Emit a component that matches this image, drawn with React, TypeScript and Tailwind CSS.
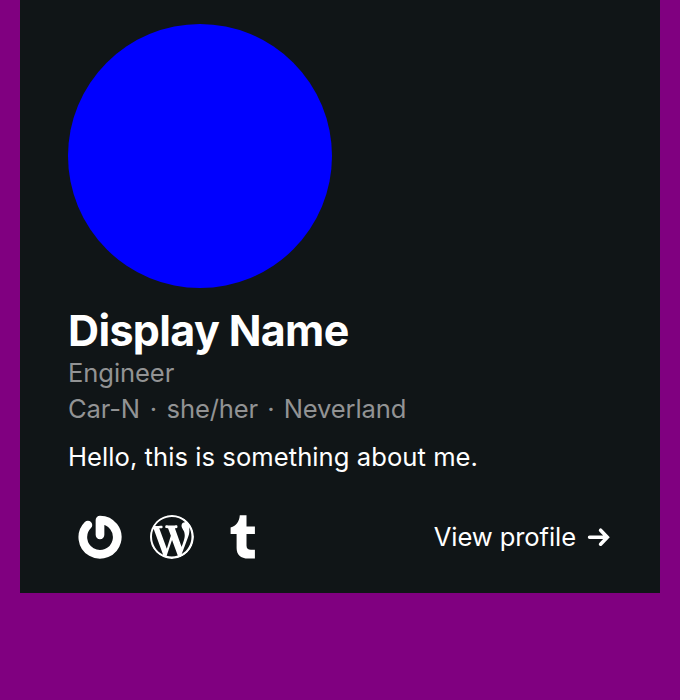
function GravatarIcon() {
  return (
    <svg viewBox="0 0 44 44" className="size-11" fill="none" stroke="currentColor" strokeWidth="8.7" strokeLinecap="round" strokeLinejoin="round">
      <path d="M22 19.8V5A17.2 17.2 0 1 1 9.9 10" />
    </svg>
  );
}

function WordPressIcon() {
  return (
    <svg viewBox="0.2 0.2 19.6 19.6" className="size-[43.5px] rounded-full" fill="currentColor">
      <path d="M20 10c0-5.51-4.49-10-10-10C4.48 0 0 4.49 0 10c0 5.52 4.48 10 10 10 5.51 0 10-4.48 10-10zM7.78 15.37L4.37 6.22c.55-.02 1.17-.08 1.17-.08.5-.06.44-1.13-.06-1.11 0 0-1.45.11-2.37.11-.18 0-.37 0-.58-.01C4.12 2.69 6.87 1.11 10 1.11c2.33 0 4.45.87 6.05 2.34-.68-.11-1.65.39-1.65 1.58 0 .74.45 1.36.9 2.1.35.61.55 1.36.55 2.46 0 1.49-1.4 5-1.4 5l-3.03-8.37c.54-.02.82-.17.82-.17.5-.05.44-1.25-.06-1.22 0 0-1.44.12-2.38.12-.87 0-2.33-.12-2.33-.12-.5-.03-.56 1.2-.06 1.22l.92.08 1.26 3.41zM17.41 10c.24-.64.74-1.87.43-4.25.7 1.29 1.05 2.71 1.05 4.25 0 3.29-1.73 6.24-4.4 7.78.97-2.59 1.94-5.2 2.92-7.78zM6.1 18.09C3.12 16.65 1.11 13.53 1.11 10c0-1.3.23-2.48.72-3.59C3.25 10.3 4.67 14.2 6.1 18.09zm4.03-6.63l2.58 6.98c-.86.29-1.76.45-2.71.45-.79 0-1.57-.11-2.29-.33.81-2.38 1.62-4.74 2.42-7.1z" />
    </svg>
  );
}

function TumblrIcon() {
  return (
    <svg viewBox="0 0 48 48" className="size-12" fill="currentColor">
      <path d="M19.8 2.3h6.7v11.1h8.4v7.5h-8.4v11.6c0 3 1.6 4.2 4.4 4.2h4v8.8h-6.6c-7.8 0-11.7-4.1-11.7-10.6v-14h-6v-6.3c6-1.9 8.7-6.2 9.2-12.3z" />
    </svg>
  );
}

export default function App() {
  return (
    <main className="h-[700px] w-[680px] overflow-hidden bg-[#800080] px-5 font-['Inter',sans-serif]">
      <section className="flex h-[593px] flex-col bg-[#101517] px-12 pt-6 text-white">
        <div className="size-[264px] shrink-0 rounded-full bg-[#0000ff]" />
        <h1 className="mt-4 text-[43px] leading-[52px] font-bold tracking-[-0.65px]">Display Name</h1>
        <p className="text-[25.6px] leading-[33px] tracking-[-0.1px] text-[#929394]">Engineer</p>
        <p className="flex text-[25.6px] leading-[39px] tracking-[-0.15px] text-[#929394]">
          <span>Car-N</span><span className="mx-[9.7px]">·</span><span>she/her</span><span className="mx-[9.2px]">·</span><span>Neverland</span>
        </p>
        <p className="mt-[11px] text-[25.6px] leading-9 tracking-[0.05px]">Hello, this is something about me.</p>
        <footer className="mt-[30px] flex h-16 items-center justify-between">
          <nav className="flex gap-2">
            <a className="flex size-16 items-center justify-center" aria-label="Gravatar"><GravatarIcon /></a>
            <a className="flex size-16 items-center justify-center" aria-label="WordPress"><WordPressIcon /></a>
            <a className="flex size-16 items-center justify-center" aria-label="Tumblr"><TumblrIcon /></a>
          </nav>
          <a className="flex items-center gap-2.5 text-[25.6px] tracking-[-0.1px]">View profile
            <svg width="26" height="20" viewBox="0 0 26 20" fill="none" stroke="currentColor" strokeWidth="3.6" strokeLinecap="round"><path d="M3.6 10.2H20M14.6 3.2l6.7 7-6.7 7" /></svg>
          </a>
        </footer>
      </section>
    </main>
  );
}
